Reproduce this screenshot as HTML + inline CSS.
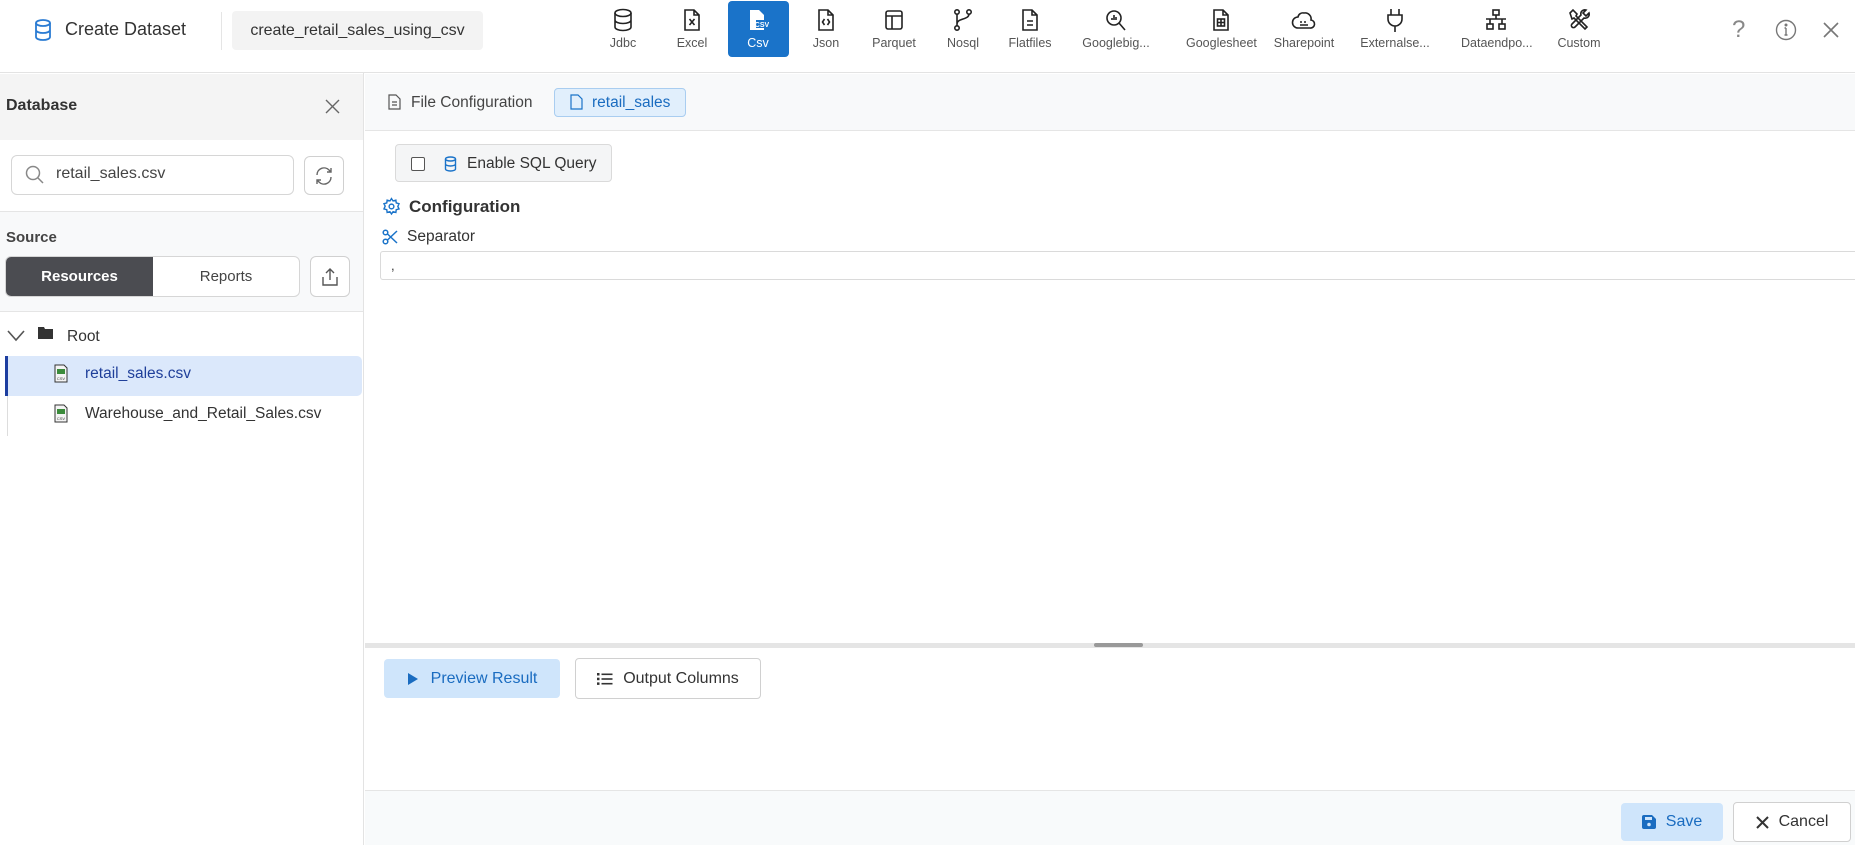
<!DOCTYPE html>
<html><head><meta charset="utf-8"><style>
*{box-sizing:border-box;margin:0;padding:0}
body{width:1855px;height:845px;overflow:hidden;background:#fff;font-family:"Liberation Sans",sans-serif;color:#333;position:relative}
.a{position:absolute}
svg{display:block}
.ti{position:absolute;top:0;width:70px;height:57px;text-align:center;font-size:12.5px;color:#555}
.ti svg{margin:8px auto 4px}
.btn{position:absolute;border:1px solid #d0d0d0;border-radius:4px;background:#fff;display:flex;align-items:center;justify-content:center}
</style></head><body>
<!-- header -->
<div class="a" style="left:0;top:0;width:1855px;height:73px;border-bottom:1px solid #e3e3e3"></div>
<svg class="a" style="left:34px;top:19px" width="18" height="22" viewBox="0 0 18 22" fill="none" stroke="#2a7bd3" stroke-width="1.8"><ellipse cx="9" cy="4" rx="7" ry="3"/><path d="M2 4v14c0 1.7 3 3 7 3s7-1.3 7-3V4M2 11c0 1.7 3 3 7 3s7-1.3 7-3"/></svg>
<div class="a" style="left:65px;top:19px;font-size:18px;color:#333">Create Dataset</div>
<div class="a" style="left:221px;top:12px;width:1px;height:38px;background:#e5e5e5"></div>
<div class="a" style="left:232px;top:11px;width:251px;height:39px;background:#f3f3f3;border-radius:4px;font-size:16px;line-height:39px;text-align:center;color:#333">create_retail_sales_using_csv</div>

<div class="a" style="left:728px;top:1px;width:61px;height:56px;background:#1a73c9;border-radius:4px"></div>
<div class="ti" style="left:588px"><svg width="22" height="24" viewBox="0 0 22 24" fill="none" stroke="#222" stroke-width="1.6"><ellipse cx="11" cy="5" rx="8" ry="3.5"/><path d="M3 5v14c0 2 3.6 3.5 8 3.5s8-1.5 8-3.5V5M3 12c0 2 3.6 3.5 8 3.5s8-1.5 8-3.5"/></svg>Jdbc</div>
<div class="ti" style="left:657px"><svg width="20" height="24" viewBox="0 0 20 24" fill="none" stroke="#222" stroke-width="1.6"><path d="M3 2h9l5 5v15H3z M12 2v5h5"/><path d="M7.5 11l5 6M12.5 11l-5 6"/></svg>Excel</div>
<div class="ti" style="left:723px;color:#fff"><svg width="22" height="24" viewBox="0 0 22 24"><path d="M3 2h9l5 5v15H3z" fill="#fff"/><rect x="9" y="12" width="12" height="8" fill="#1a73c9"/><text x="15" y="19" font-size="7" font-weight="bold" fill="#fff" text-anchor="middle" font-family="Liberation Sans">CSV</text></svg>Csv</div>
<div class="ti" style="left:791px"><svg width="20" height="24" viewBox="0 0 20 24" fill="none" stroke="#222" stroke-width="1.6"><path d="M3 2h9l5 5v15H3z M12 2v5h5"/><path d="M8.5 11l-2 3 2 3M11.5 11l2 3-2 3"/></svg>Json</div>
<div class="ti" style="left:859px"><svg width="22" height="24" viewBox="0 0 22 24" fill="none" stroke="#222" stroke-width="1.6"><rect x="3" y="3" width="16" height="18" rx="2"/><path d="M3 8h16M9 8v13"/></svg>Parquet</div>
<div class="ti" style="left:928px"><svg width="22" height="24" viewBox="0 0 22 24" fill="none" stroke="#222" stroke-width="1.6"><circle cx="5" cy="4" r="2.2"/><circle cx="17" cy="4" r="2.2"/><circle cx="5" cy="20" r="2.2"/><path d="M5 6v12M17 6c0 6-12 4-12 10"/></svg>Nosql</div>
<div class="ti" style="left:995px"><svg width="20" height="24" viewBox="0 0 20 24" fill="none" stroke="#222" stroke-width="1.6"><path d="M3 2h9l5 5v15H3z M12 2v5h5M7 13h6M7 17h6"/></svg>Flatfiles</div>
<div class="ti" style="left:1081px"><svg width="24" height="24" viewBox="0 0 24 24" fill="none" stroke="#222" stroke-width="1.6"><circle cx="10" cy="10" r="7"/><path d="M15 15l6 7M8 12v-2M10 12V7M12 12v-3"/></svg>Googlebig...</div>
<div class="ti" style="left:1186px"><svg width="20" height="24" viewBox="0 0 20 24" fill="none" stroke="#222" stroke-width="1.6"><path d="M3 2h9l5 5v15H3z M12 2v5h5"/><rect x="6.5" y="11" width="7" height="7"/><path d="M10 11v7M6.5 14.5h7"/></svg>Googlesheet</div>
<div class="ti" style="left:1269px"><svg width="26" height="24" viewBox="0 0 26 24" fill="none" stroke="#222" stroke-width="1.6"><path d="M7 20h12a4 4 0 0 0 1-8 6 6 0 0 0-7-7 5 5 0 0 0-6 4 5 5 0 0 0 0 11z"/><path d="M9 14h2M13 14h2M9 17h8"/></svg>Sharepoint</div>
<div class="ti" style="left:1360px"><svg width="22" height="24" viewBox="0 0 22 24" fill="none" stroke="#222" stroke-width="1.6"><path d="M7 1v6M15 1v6M4 7h14v4a7 7 0 0 1-14 0zM11 18v6"/></svg>Externalse...</div>
<div class="ti" style="left:1461px"><svg width="24" height="24" viewBox="0 0 24 24" fill="none" stroke="#222" stroke-width="1.6"><rect x="9" y="2" width="6" height="5"/><rect x="3" y="16" width="6" height="5"/><rect x="15" y="16" width="6" height="5"/><path d="M12 7v4M2 11h20M6 11v5M18 11v5"/></svg>Dataendpo...</div>
<div class="ti" style="left:1544px"><svg width="24" height="24" viewBox="0 0 24 24" fill="none" stroke="#222" stroke-width="1.6"><path d="M3 5l3-3 4 4-1 2 11 11-2 2L7 10l-2 1zM14 7a4 4 0 0 1 5-5l-3 3 3 3 3-3a4 4 0 0 1-5 5L8 19a2 2 0 0 1-3-3z"/></svg>Custom</div>

<div class="a" style="left:1732px;top:16px;font-size:24px;color:#888">?</div>
<svg class="a" style="left:1775px;top:19px" width="22" height="22" viewBox="0 0 22 22" fill="none" stroke="#777" stroke-width="1.4"><circle cx="11" cy="11" r="9.5"/><path d="M11 9v7M9.5 16h3M9.5 9H11"/><circle cx="11" cy="6" r=".8" fill="#777"/></svg>
<svg class="a" style="left:1822px;top:21px" width="18" height="18" viewBox="0 0 18 18" stroke="#777" stroke-width="1.6"><path d="M2 2l14 14M16 2L2 16"/></svg>

<!-- sidebar -->
<div class="a" style="left:0;top:73px;width:364px;height:772px;border-right:1px solid #e3e3e3"></div>
<div class="a" style="left:0;top:74px;width:363px;height:66px;background:#f4f4f4"></div>
<div class="a" style="left:6px;top:97px;font-size:16px;font-weight:bold;color:#333">Database</div>
<svg class="a" style="left:325px;top:99px" width="15" height="15" viewBox="0 0 15 15" stroke="#666" stroke-width="1.4"><path d="M1 1l13 13M14 1L1 14"/></svg>
<div class="a" style="left:0;top:140px;width:363px;height:72px;background:#fff;border-bottom:1px solid #e5e5e5"></div>
<div class="a" style="left:11px;top:155px;width:283px;height:40px;border:1px solid #d6d6d6;border-radius:6px"></div>
<svg class="a" style="left:25px;top:165px" width="20" height="20" viewBox="0 0 20 20" fill="none" stroke="#888" stroke-width="1.5"><circle cx="8" cy="8" r="6.5"/><path d="M13 13l5 5"/></svg>
<div class="a" style="left:56px;top:165px;font-size:16px;color:#444">retail_sales.csv</div>
<div class="btn" style="left:304px;top:156px;width:40px;height:39px;border-radius:6px"><svg width="22" height="22" viewBox="0 0 22 22" fill="none" stroke="#666" stroke-width="1.4"><path d="M4 10a7 7 0 0 1 12-5l2 2M18 3v4h-4M18 12a7 7 0 0 1-12 5l-2-2M4 19v-4h4"/></svg></div>
<div class="a" style="left:0;top:212px;width:363px;height:100px;background:#f8f9fa;border-bottom:1px solid #e5e5e5"></div>
<div class="a" style="left:6px;top:229px;font-size:15px;font-weight:bold;color:#444">Source</div>
<div class="a" style="left:5px;top:256px;width:295px;height:41px;border:1px solid #d6d6d6;border-radius:6px;background:#fff;overflow:hidden;display:flex">
<div style="width:147px;background:#4b4c51;color:#fff;font-weight:bold;font-size:15px;display:flex;align-items:center;justify-content:center">Resources</div>
<div style="flex:1;font-size:15px;color:#444;display:flex;align-items:center;justify-content:center">Reports</div></div>
<div class="btn" style="left:310px;top:256px;width:40px;height:41px;border-radius:6px"><svg width="20" height="20" viewBox="0 0 20 20" fill="none" stroke="#555" stroke-width="1.4"><path d="M10 13V2M6 6l4-4 4 4M3 10v8h14v-8"/></svg></div>
<svg class="a" style="left:7px;top:330px" width="18" height="12" viewBox="0 0 18 12" fill="none" stroke="#555" stroke-width="1.6"><path d="M1 1l8 9 8-9"/></svg>
<svg class="a" style="left:38px;top:326px" width="15" height="13" viewBox="0 0 15 13"><path d="M0 1h6l1 2h8v10H0z" fill="#333"/></svg>
<div class="a" style="left:67px;top:328px;font-size:15.5px;color:#333">Root</div>
<div class="a" style="left:7px;top:396px;width:1px;height:40px;background:#ddd"></div>
<div class="a" style="left:6px;top:356px;width:356px;height:40px;background:#dbe8fb;border-radius:0 5px 5px 0"></div>
<div class="a" style="left:5px;top:356px;width:3px;height:40px;background:#1d3ea0"></div>
<svg class="a" style="left:54px;top:364px" width="14" height="19" viewBox="0 0 14 19"><path d="M1 1h9l3 3v14H1z" fill="#f4f4f4" stroke="#333" stroke-width="1"/><rect x="3" y="5" width="8" height="5" fill="#3b8b3b"/><text x="7" y="16" font-size="4" text-anchor="middle" fill="#333">CSV</text></svg>
<div class="a" style="left:85px;top:365px;font-size:15.5px;color:#1f3f9a">retail_sales.csv</div>
<svg class="a" style="left:54px;top:404px" width="14" height="19" viewBox="0 0 14 19"><path d="M1 1h9l3 3v14H1z" fill="#f4f4f4" stroke="#333" stroke-width="1"/><rect x="3" y="5" width="8" height="5" fill="#3b8b3b"/><text x="7" y="16" font-size="4" text-anchor="middle" fill="#333">CSV</text></svg>
<div class="a" style="left:85px;top:405px;font-size:15.5px;color:#333">Warehouse_and_Retail_Sales.csv</div>

<!-- main -->
<div class="a" style="left:365px;top:74px;width:1490px;height:57px;background:#f8f9fa;border-bottom:1px solid #e5e5e5"></div>
<svg class="a" style="left:388px;top:94px" width="13" height="16" viewBox="0 0 13 16" fill="none" stroke="#555" stroke-width="1.2"><path d="M1 1h7l4 4v10H1zM4 8h5M4 11h5"/></svg>
<div class="a" style="left:411px;top:94px;font-size:15.5px;color:#444">File Configuration</div>
<div class="a" style="left:554px;top:88px;width:132px;height:29px;background:#e1effc;border:1px solid #a9cdf0;border-radius:4px"></div>
<svg class="a" style="left:570px;top:94px" width="13" height="16" viewBox="0 0 13 16" fill="none" stroke="#1a73c9" stroke-width="1.2"><path d="M1 1h7l4 4v10H1z"/></svg>
<div class="a" style="left:592px;top:94px;font-size:15.5px;color:#1a6cc0">retail_sales</div>

<div class="a" style="left:395px;top:144px;width:217px;height:38px;background:#f4f5f6;border:1px solid #dadada;border-radius:4px"></div>
<div class="a" style="left:411px;top:157px;width:14px;height:14px;border:1.5px solid #555;border-radius:2px;background:#fff"></div>
<svg class="a" style="left:444px;top:156px" width="13" height="16" viewBox="0 0 13 16" fill="none" stroke="#1a73c9" stroke-width="1.4"><ellipse cx="6.5" cy="3" rx="5" ry="2"/><path d="M1.5 3v10c0 1.1 2.2 2 5 2s5-.9 5-2V3M1.5 8c0 1.1 2.2 2 5 2s5-.9 5-2"/></svg>
<div class="a" style="left:467px;top:155px;font-size:15.5px;color:#333">Enable SQL Query</div>

<svg class="a" style="left:382px;top:197px" width="19" height="19" viewBox="0 0 24 24" fill="none" stroke="#1a73c9" stroke-width="1.8"><circle cx="12" cy="12" r="3"/><path d="M12 2l2 3 3.5-1 .5 3.5 3.5 1-1.5 3.5 1.5 3-3.5 1-.5 3.5-3.5-1-2 3-2-3-3.5 1-.5-3.5-3.5-1 1.5-3.5L2.5 8.5 6 7.5 6.5 4l3.5 1z"/></svg>
<div class="a" style="left:409px;top:197px;font-size:17px;font-weight:bold;color:#333">Configuration</div>
<svg class="a" style="left:382px;top:229px" width="16" height="16" viewBox="0 0 16 16" fill="none" stroke="#1a73c9" stroke-width="1.5"><circle cx="3.5" cy="3.5" r="2.3"/><circle cx="3.5" cy="12.5" r="2.3"/><path d="M5.5 5L15 14M5.5 11L15 2"/></svg>
<div class="a" style="left:407px;top:228px;font-size:15.5px;color:#333">Separator</div>
<div class="a" style="left:380px;top:251px;width:1480px;height:29px;border:1px solid #dadada;border-radius:3px"></div>
<div class="a" style="left:391px;top:258px;font-size:13px;color:#333">,</div>

<div class="a" style="left:365px;top:643px;width:1490px;height:5px;background:#e5e5e5"></div>
<div class="a" style="left:1094px;top:643px;width:49px;height:4px;background:#999;border-radius:2px"></div>
<div class="a" style="left:384px;top:659px;width:176px;height:39px;background:#cfe5fb;border-radius:4px;display:flex;align-items:center;justify-content:center;color:#1a6cc0;font-size:16px"><svg width="12" height="14" viewBox="0 0 12 14" style="margin-right:12px"><path d="M1 1l10 6-10 6z" fill="#1a6cc0"/></svg>Preview Result</div>
<div class="btn" style="left:575px;top:658px;width:186px;height:41px;font-size:16px;color:#333"><svg width="16" height="14" viewBox="0 0 16 14" style="margin-right:10px" fill="#333"><rect x="0" y="1" width="2.5" height="2.5"/><rect x="0" y="5.7" width="2.5" height="2.5"/><rect x="0" y="10.4" width="2.5" height="2.5"/><rect x="4.5" y="1.5" width="11" height="1.6"/><rect x="4.5" y="6.2" width="11" height="1.6"/><rect x="4.5" y="10.9" width="11" height="1.6"/></svg>Output Columns</div>

<div class="a" style="left:365px;top:790px;width:1490px;height:55px;background:#f8fafb;border-top:1px solid #e5e5e5"></div>
<div class="a" style="left:1621px;top:803px;width:102px;height:38px;background:#cfe5fb;border-radius:4px;display:flex;align-items:center;justify-content:center;color:#1a6cc0;font-size:16px"><svg width="14" height="14" viewBox="0 0 14 14" style="margin-right:10px"><path d="M0 2a2 2 0 0 1 2-2h8l4 4v8a2 2 0 0 1-2 2H2a2 2 0 0 1-2-2z" fill="#1a6cc0"/><rect x="3" y="2" width="7" height="3" fill="#cfe5fb"/><circle cx="7" cy="9.5" r="1.8" fill="#cfe5fb"/></svg>Save</div>
<div class="btn" style="left:1733px;top:802px;width:118px;height:40px;font-size:16px;color:#333"><svg width="13" height="13" viewBox="0 0 13 13" style="margin-right:10px" stroke="#333" stroke-width="2"><path d="M1 1l11 11M12 1L1 12"/></svg>Cancel</div>
</body></html>
